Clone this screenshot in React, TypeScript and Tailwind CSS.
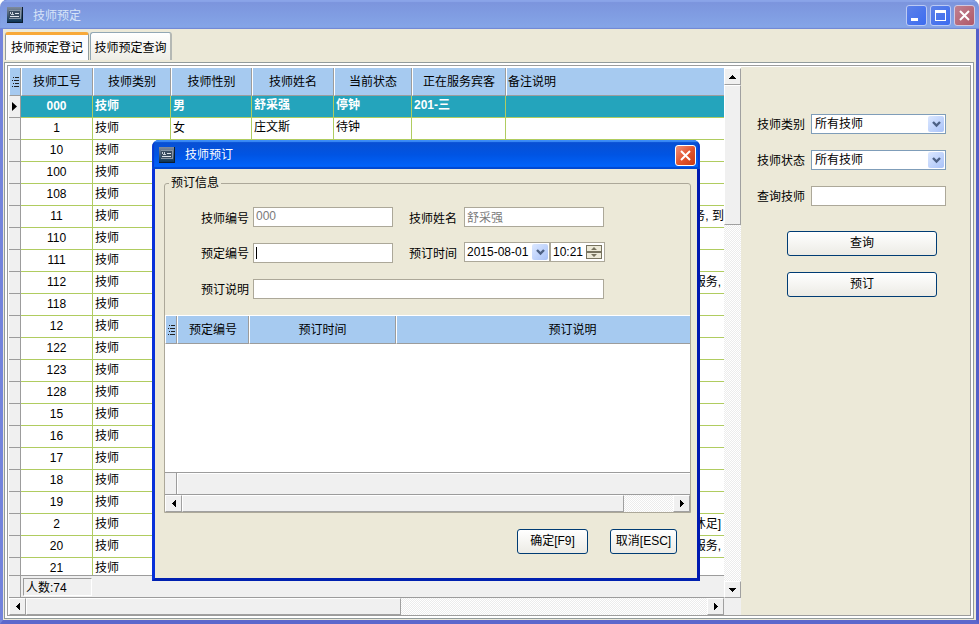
import type { ReactNode } from "react";

type Row = { id: string; sex?: string; name?: string; state?: string; guest?: string; note?: string; cut?: boolean };

const rows: Row[] = [
  { id: "000", sex: "男", name: "舒采强", state: "停钟", guest: "201-三" },
  { id: "1", sex: "女", name: "庄文斯", state: "待钟" },
  { id: "10" },
  { id: "100" },
  { id: "108" },
  { id: "11", note: "服务, 到", cut: true },
  { id: "110" },
  { id: "111" },
  { id: "112", note: "服务," },
  { id: "118" },
  { id: "12" },
  { id: "122" },
  { id: "123" },
  { id: "128" },
  { id: "15" },
  { id: "16" },
  { id: "17" },
  { id: "18" },
  { id: "19" },
  { id: "2", note: "沐足]" },
  { id: "20", note: "服务," },
  { id: "21" },
];

const headers = ["技师工号", "技师类别", "技师性别", "技师姓名", "当前状态", "正在服务宾客"];

function AppIcon() {
  return (
    <svg width="16" height="16" viewBox="0 0 16 16" className="shrink-0" aria-hidden="true">
      <defs>
        <linearGradient id="appIcon" x1="0" y1="0" x2="0" y2="1">
          <stop offset="0" stopColor="#7f8b9c" />
          <stop offset="0.5" stopColor="#4a6078" />
          <stop offset="1" stopColor="#0c3454" />
        </linearGradient>
      </defs>
      <rect width="16" height="16" fill="#0a1c30" />
      <rect width="15" height="15" fill="url(#appIcon)" />
      <rect x="2" y="4" width="11" height="7" fill="#3a4c60" />
      <path d="M3 9.500h9M8 6.500h4" stroke="#dfe5ec" fill="none" />
      <path d="M3.500 5v2M5.500 5v3M4 7.500h3" stroke="#c8d0da" fill="none" />
      <path d="M2 3.500h12M13.500 3v8M2 11.500h12" stroke="#8795a5" fill="none" />
    </svg>
  );
}

function ListIcon() {
  return (
    <svg width="7" height="10" viewBox="0 0 7 10" className="mx-auto block" aria-hidden="true" shapeRendering="crispEdges">
      <path d="M1 .5h1M3 .5h4M0 3.500h1M2 3.500h5M1 6.500h1M3 6.500h4M0 9.500h1M2 9.500h5" stroke="#222" />
    </svg>
  );
}

const arrows = {
  up: "M0 4h7V3H6V2H5V1H4V0H3V1H2V2H1V3H0z",
  down: "M0 0h7V1H6V2H5V3H4V4H3V3H2V2H1V1H0z",
  left: "M4 0v7H3V6H2V5H1V4H0V3H1V2H2V1H3V0z",
  right: "M0 0v7H1V6H2V5H3V4H4V3H3V2H2V1H1V0z",
};

function ScrollButton({ dir }: { dir: keyof typeof arrows }) {
  const vertical = dir === "up" || dir === "down";
  return (
    <button
      type="button"
      aria-label={dir}
      className="flex h-[17px] w-[17px] shrink-0 items-center justify-center border-t border-r border-b border-l border-t-white border-l-white border-r-[#a0a0a0] border-b-[#a0a0a0] bg-[#f0f0f0]"
    >
      <svg
        width={vertical ? 7 : 4}
        height={vertical ? 4 : 7}
        viewBox={vertical ? "0 0 7 4" : "0 0 4 7"}
        shapeRendering="crispEdges"
        aria-hidden="true"
      >
        <path d={arrows[dir]} />
      </svg>
    </button>
  );
}

const track = "bg-[#fff] bg-[repeating-conic-gradient(#ececec_0_25%,#ffffff_0_50%)] bg-size-[2px_2px]";
const thumb = "border-t border-l border-r border-b border-t-white border-l-white border-r-[#a0a0a0] border-b-[#a0a0a0] bg-[#f0f0f0]";

function Chevron() {
  return (
    <span className="pointer-events-none absolute top-[2px] right-[2px] flex h-4 w-4 items-center justify-center rounded-[2px] bg-linear-to-br from-[#dce8ff] to-[#a9c2f8]">
      <svg width="9" height="7" viewBox="0 0 9 7" aria-hidden="true">
        <path d="M1 1l3.500 3.500L8 1" fill="none" stroke="#4d6185" strokeWidth="2.400" />
      </svg>
    </span>
  );
}

function FilterSelect({ id, label }: { id: string; label: string }) {
  return (
    <div className="flex items-center">
      <label htmlFor={id} className="w-[54px] shrink-0 pt-[2px]">{label}</label>
      <div className="relative w-[135px]">
        <select id={id} className="block h-5 w-full appearance-none border border-[#7f9db9] bg-white pl-[3px] leading-[18px] outline-none">
          <option>所有技师</option>
        </select>
        <Chevron />
      </div>
    </div>
  );
}

function XpButton({ children, className }: { children: ReactNode; className: string }) {
  return (
    <button
      type="button"
      className={`h-[25px] rounded-[3px] border border-[#003c74] bg-linear-to-b from-white to-[#ecebe5] pb-[2px] text-center whitespace-nowrap ${className}`}
    >
      {children}
    </button>
  );
}

function CloseGlyph() {
  return (
    <svg width="11" height="11" viewBox="0 0 11 11" aria-hidden="true">
      <path d="M1 1l9 9M10 1l-9 9" stroke="#fff" strokeWidth="2" />
    </svg>
  );
}

const th = "h-7 border-r border-b border-l border-r-[#9c9c9c] border-b-[#9c9c9c] border-l-white bg-[#a6caf0] p-0 font-normal";
const field = "h-5 border border-[#aca899] bg-white px-[2px] outline-none";

function TechnicianGrid() {
  return (
    <div className="min-h-0 flex-1 overflow-hidden border-b border-[#9c9c9c] bg-white">
      <table className="w-full table-fixed border-separate border-spacing-0">
        <colgroup>
          <col className="w-[12px]" />
          <col className="w-[72px]" />
          <col className="w-[78px]" />
          <col className="w-[81px]" />
          <col className="w-[82px]" />
          <col className="w-[78px]" />
          <col className="w-[94px]" />
          <col />
        </colgroup>
        <thead>
          <tr>
            <th className={th}><ListIcon /></th>
            {headers.map((h) => (
              <th key={h} className={th}>{h}</th>
            ))}
            <th className="h-7 border-b border-l border-b-[#9c9c9c] border-l-white bg-[#a6caf0] p-0 pl-px text-left font-normal">备注说明</th>
          </tr>
        </thead>
        <tbody>
          {rows.map((r, i) => {
            const on = i === 0;
            const cell = `h-[22px] border-r border-b border-[#b0cc60] p-0 whitespace-nowrap ${on ? "bg-[#24a4bc] font-bold text-white" : "bg-white"}`;
            return (
              <tr key={r.id}>
                <td className="h-[22px] border-r border-b border-[#9c9c9c] bg-[#f0f0f0] p-0">
                  {on && (
                    <svg width="5" height="9" viewBox="0 0 5 9" className="mx-auto block" aria-label="当前行">
                      <path d="M0 0v9l5-4.500z" />
                    </svg>
                  )}
                </td>
                <td className={`${cell} text-center leading-[21px]`}>{r.id}</td>
                <td className={`${cell} pl-[2px] leading-[21px]`}>技师</td>
                <td className={`${cell} pl-[2px] leading-[21px]`}>{r.sex}</td>
                <td className={`${cell} pb-[3px] pl-[2px] leading-[18px]`}>{r.name}</td>
                <td className={`${cell} pb-[3px] pl-[2px] leading-[18px]`}>{r.state}</td>
                <td className={`${cell} pb-[3px] pl-[2px] leading-[18px]`}>{r.guest}</td>
                <td className={`h-[22px] border-b border-[#b0cc60] p-0 text-right leading-[21px] ${on ? "bg-[#24a4bc]" : "bg-white"} ${r.cut ? "" : "pr-[3px]"}`}>
                  {r.note}
                </td>
              </tr>
            );
          })}
        </tbody>
      </table>
    </div>
  );
}

function BookingDialog() {
  return (
    <div
      role="dialog"
      aria-label="技师预订"
      className="absolute top-[140px] left-[152px] w-[548px] overflow-hidden rounded-t-[7px] bg-[#ece9d8]"
    >
      <div className="flex h-[29px] items-center bg-linear-to-b from-[#0a4fd0] via-[#0054e3] to-[#0066ff] pr-1 pl-[7px] shadow-[inset_0_2px_1px_#3c8cf8,inset_0_-2px_1px_#0048d0,inset_2px_0_1px_#0838d0,inset_-2px_0_1px_#0838d0]">
        <AppIcon />
        <h2 className="ml-[10px] flex-1 pt-px text-white">技师预订</h2>
        <button
          type="button"
          aria-label="关闭"
          className="mt-px flex h-[21px] w-[21px] items-center justify-center rounded-[3px] border border-white bg-linear-to-br from-[#f0907a] via-[#e2562f] to-[#c83a10]"
        >
          <CloseGlyph />
        </button>
      </div>
      <div className="border-r-[3px] border-b-[3px] border-l-[3px] border-r-[#0019b0] border-b-[#0020b0] border-l-[#0831d9] px-[9px] pt-[5px] pb-6">
        <fieldset className="w-[527px] min-w-0 rounded-t-[3px] border border-[#aca899]">
          <legend className="ml-1 px-[2px] leading-[18px]">预订信息</legend>
          <div className="grid grid-cols-[52px_140px_67px_141px] gap-y-4 pt-[15px] pl-9">
            <label htmlFor="techNo" className="pt-1 leading-4">技师编号</label>
            <input id="techNo" disabled defaultValue="000" className={`${field} pb-[2px] text-[#7a7a7a]`} />
            <label htmlFor="techName" className="pt-1 pl-4 leading-4">技师姓名</label>
            <input id="techName" disabled defaultValue="舒采强" className={`${field} ml-[4px] w-[140px] pb-[2px] text-[#7a7a7a]`} />

            <label htmlFor="bookNo" className="pt-[3px] leading-4">预定编号</label>
            <div className={`${field} flex items-center`}>
              <span className="h-3 w-px bg-black" />
              <input id="bookNo" className="h-4 w-full min-w-0 outline-none" />
            </div>
            <label htmlFor="bookDate" className="pt-[3px] pl-4 leading-4">预订时间</label>
            <div className="-mt-px ml-[4px] flex w-[141px]">
              <div className="relative w-[86px]">
                <input id="bookDate" defaultValue="2015-08-01" className={`${field} block w-full`} />
                <Chevron />
              </div>
              <div className={`${field} flex w-[55px] items-center pr-[2px]`}>
                <input aria-label="时间" defaultValue="10:21" className="h-4 w-full min-w-0 outline-none" />
                <button type="button" aria-label="调整时间" className="h-[14px] w-4 shrink-0 border border-[#77735f] bg-[#ece9d8]">
                  <svg width="14" height="12" viewBox="0 0 14 12" className="block" aria-hidden="true">
                    <path d="M0 5h14v2H0zM7 1l3 3H4zM7 11L4 8h6z" fill="#77735f" />
                  </svg>
                </button>
              </div>
            </div>

            <label htmlFor="bookNote" className="pt-[3px] leading-4">预订说明</label>
            <input id="bookNote" className={`${field} col-span-3 w-[351px]`} />
          </div>

          <div className="mt-4 border-t border-white">
            <div className="h-[156px] bg-white">
              <table className="w-full table-fixed border-separate border-spacing-0">
                <colgroup>
                  <col className="w-[12px]" />
                  <col className="w-[72px]" />
                  <col className="w-[147px]" />
                  <col />
                </colgroup>
                <thead>
                  <tr>
                    <th className={th}><ListIcon /></th>
                    <th className={th}>预定编号</th>
                    <th className={th}>预订时间</th>
                    <th className="h-7 border-b border-l border-b-[#9c9c9c] border-l-white bg-[#a6caf0] p-0 pl-[58px] font-normal">预订说明</th>
                  </tr>
                </thead>
              </table>
            </div>
            <div className="flex h-[23px] border-t border-b border-[#9c9c9c] bg-[#f0f0f0]">
              <div className="w-[12px] border-r border-[#9c9c9c]" />
              <div className="flex-1 border-t border-l border-white" />
            </div>
            <div className="flex h-[17px]">
              <ScrollButton dir="left" />
              <div className={`flex-1 ${track}`}>
                <div className={`h-full w-[90%] ${thumb}`} />
              </div>
              <ScrollButton dir="right" />
            </div>
          </div>
        </fieldset>
        <div className="mt-4 flex justify-end gap-[22px] pr-[11px]">
          <XpButton className="w-[71px]">确定[F9]</XpButton>
          <XpButton className="w-[67px]">取消[ESC]</XpButton>
        </div>
      </div>
    </div>
  );
}

export default function App() {
  return (
    <div className="relative flex h-screen flex-col overflow-hidden rounded-t-[7px] bg-[#ece9d8] font-['Liberation_Sans','Noto_Sans_CJK_SC',sans-serif] text-[12px] leading-4 text-black">
      <header className="flex h-[29px] shrink-0 items-center gap-[3px] bg-linear-to-b from-[#7b93dc] to-[#85a6e8] pr-1 pl-[7px] shadow-[inset_0_2px_1px_#8aa4e8,inset_0_1px_0_#4a62c0,inset_0_-1px_1px_#7088d4]">
        <AppIcon />
        <h1 className="ml-[7px] flex-1 pt-[2px] text-[#d8e4f8]">技师预定</h1>
        <button type="button" aria-label="最小化" className="mt-[2px] flex h-[21px] w-[21px] items-end rounded-[3px] border border-[#bccaf4] bg-linear-to-br from-[#5c80e8] to-[#3c6cf0] pb-[4px] pl-1">
          <span className="h-[3px] w-[7px] bg-white" />
        </button>
        <button type="button" aria-label="最大化" className="mt-[2px] flex h-[21px] w-[21px] items-center justify-center rounded-[3px] border border-[#bccaf4] bg-linear-to-br from-[#5c80e8] to-[#3c6cf0]">
          <span className="h-[11px] w-[11px] border border-t-[3px] border-white" />
        </button>
        <button type="button" aria-label="关闭" className="mt-[2px] flex h-[21px] w-[21px] items-center justify-center rounded-[3px] border border-[#d0c8e0] bg-linear-to-br from-[#c08090] to-[#b05868]">
          <CloseGlyph />
        </button>
      </header>

      <div className="flex min-h-0 flex-1 flex-col border-r-[3px] border-b-[4px] border-l-[3px] border-r-[#5560c8] border-b-[#5c68cc] border-l-[#7484dc] pr-[2px] pb-px pl-px">
        <nav role="tablist" className="flex h-[33px] shrink-0 gap-px pt-[3px] pb-[2px] pl-px">
          <button type="button" role="tab" aria-selected="true" className="w-[84px] rounded-t-[3px] border-t-[3px] border-r border-l border-t-[#f8a838] border-r-[#919b9c] border-l-[#919b9c] bg-[#fcfcfe] whitespace-nowrap">
            技师预定登记
          </button>
          <button type="button" role="tab" aria-selected="false" className="w-[82px] rounded-t-[3px] border-t border-r-2 border-l border-[#91a7b4] border-r-[#b4b8b4] bg-linear-to-b from-white to-[#eeede6] pt-[2px] whitespace-nowrap">
            技师预定查询
          </button>
        </nav>

        <div className="flex min-h-0 flex-1 flex-col border border-[#919b9c] bg-white p-[2px]">
          <main className="flex min-h-0 flex-1 border border-[#9c9c9c] pt-px pl-px">
            <section className="flex min-w-0 flex-1 flex-col pt-px">
              <div className="flex min-h-0 flex-1">
                <div className="flex min-w-0 flex-1 flex-col">
                  <TechnicianGrid />
                  <div className="flex h-[22px] shrink-0 border-b border-[#9c9c9c] bg-[#f0f0f0]">
                    <div className="w-[12px] border-r border-[#9c9c9c]" />
                    <div className="mt-[2px] ml-[2px] h-[18px] w-[69px] border-t border-r border-b border-l border-t-[#9c9c9c] border-l-[#9c9c9c] border-r-white border-b-white pl-[2px] leading-[18px]">
                      人数:74
                    </div>
                  </div>
                </div>
                <div className={`flex w-[17px] flex-col ${track}`}>
                  <ScrollButton dir="up" />
                  <div className={`h-[140px] ${thumb}`} />
                  <div className="flex-1" />
                  <ScrollButton dir="down" />
                </div>
              </div>
              <div className="flex h-[17px] shrink-0 bg-[#f0f0f0] pr-[17px]">
                <ScrollButton dir="left" />
                <div className={`flex-1 ${track}`}>
                  <div className={`h-full w-[55%] ${thumb}`} />
                </div>
                <ScrollButton dir="right" />
              </div>
            </section>

            <aside className="w-[229px] bg-[#ece9d8] pt-[47px] pl-4">
              <div className="flex flex-col gap-4">
                <FilterSelect id="kind" label="技师类别" />
                <FilterSelect id="state" label="技师状态" />
                <div className="flex items-center">
                  <label htmlFor="query" className="w-[54px] shrink-0 pt-[2px]">查询技师</label>
                  <input id="query" className={`${field} w-[135px]`} />
                </div>
              </div>
              <div className="mt-[25px] ml-[30px] flex w-[150px] flex-col gap-4">
                <XpButton className="w-full">查询</XpButton>
                <XpButton className="w-full">预订</XpButton>
              </div>
            </aside>
          </main>
        </div>
      </div>

      <BookingDialog />
    </div>
  );
}
